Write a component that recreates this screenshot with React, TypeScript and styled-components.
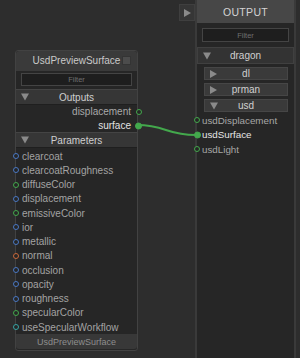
import React from 'react';
import styled, { createGlobalStyle } from 'styled-components';

const GlobalStyle = createGlobalStyle`
  html, body {
    margin: 0;
    padding: 0;
    background: #2d2d2d;
    font-family: "Liberation Sans", Arial, sans-serif;
  }
`;

const Page = styled.div`
  position: relative;
  width: 300px;
  height: 358px;
  overflow: hidden;
  display: flex;
  background: #2d2d2d;
`;

const Canvas = styled.div`
  position: relative;
  flex: 1;
`;

const Wire = styled.svg`
  position: absolute;
  left: 0;
  top: 0;
  pointer-events: none;
  z-index: 3;
`;

// node window, its place on the graph is the content
const Node = styled.div`
  position: absolute;
  left: 15px;
  top: 50px;
  width: 121px;
  height: 299px;
  background: #262626;
  border: 1px solid #424242;
  border-radius: 3px;
  display: flex;
  flex-direction: column;
`;

const NodeHeader = styled.div`
  height: 20px;
  background: #3a3a3a;
  position: relative;
  display: flex;
  align-items: center;
  justify-content: center;
  color: #c9c9c9;
  font-size: 10px;
  border-radius: 3px 3px 0 0;
`;

const Swatch = styled.div`
  position: absolute;
  right: 6px;
  top: 5px;
  width: 7px;
  height: 7px;
  background: #4c4c4c;
  border: 1px solid #343434;
`;

const FilterBox = styled.div<{ $w: number }>`
  width: ${p => p.$w}px;
  height: 12px;
  margin: 2px auto 0;
  background: #1e1e1e;
  border: 1px solid #444;
  color: #6e6e6e;
  font-size: 7.5px;
  display: flex;
  align-items: center;
  justify-content: center;
`;

const SectionBar = styled.div<{ $mt: number }>`
  height: 14px;
  margin-top: ${p => p.$mt}px;
  background: #363636;
  border-top: 1px solid #444;
  border-bottom: 1px solid #1f1f1f;
  position: relative;
  display: flex;
  align-items: center;
  justify-content: center;
  color: #cfcfcf;
  font-size: 10px;
`;

const Arrow = styled.span<{ $down?: boolean }>`
  position: absolute;
  left: 5px;
  top: 50%;
  transform: translateY(-50%);
  width: 0;
  height: 0;
  ${p =>
    p.$down
      ? `border-left: 4px solid transparent; border-right: 4px solid transparent; border-top: 7px solid #8a8a8a;`
      : `border-top: 4px solid transparent; border-bottom: 4px solid transparent; border-left: 7px solid #8a8a8a;`}
`;

const ToggleArrow = styled.span`
  width: 0;
  height: 0;
  border-top: 4px solid transparent;
  border-bottom: 4px solid transparent;
  border-left: 7px solid #8a8a8a;
`;

const OutRow = styled.div<{ $bright?: boolean }>`
  height: 14px;
  display: flex;
  align-items: center;
  justify-content: flex-end;
  padding-right: 6px;
  position: relative;
  color: ${p => (p.$bright ? '#e2e2e2' : '#a9a9a9')};
  font-size: 10px;
`;

const ParamList = styled.div`
  padding-top: 1px;
  flex: 1;
`;

const ParamRow = styled.div`
  height: 14.25px;
  display: flex;
  align-items: center;
  padding-left: 6px;
  position: relative;
  color: #a3a3a3;
  font-size: 10px;
`;

const Port = styled.span<{ $c: string; $filled?: boolean; $side: 'left' | 'right' }>`
  position: absolute;
  ${p => (p.$side === 'left' ? 'left: -3.5px;' : 'right: -4.5px;')}
  top: 50%;
  transform: translateY(-50%);
  width: ${p => (p.$filled ? 7 : 6)}px;
  height: ${p => (p.$filled ? 7 : 6)}px;
  box-sizing: border-box;
  border-radius: 50%;
  border: 1.6px solid ${p => p.$c};
  background: ${p => (p.$filled ? p.$c : '#262626')};
`;

const NodeFooter = styled.div`
  height: 15px;
  margin: 0 0 1px;
  background: #383838;
  color: #8e8e8e;
  font-size: 9px;
  display: flex;
  align-items: center;
  justify-content: center;
  border-radius: 0 0 3px 3px;
`;

const ToggleBtn = styled.div`
  position: absolute;
  right: 0;
  top: 4px;
  width: 14px;
  height: 15px;
  background: #363636;
  border: 1px solid #3f3f3f;
  display: flex;
  align-items: center;
  justify-content: center;
`;

const Panel = styled.div`
  width: 97px;
  height: 100%;
  border-left: 2px solid #3a3a3a;
  border-right: 2px solid #3a3a3a;
  margin-right: 4px;
  background: #262626;
  display: flex;
  flex-direction: column;
  position: relative;
`;

const PanelHeader = styled.div`
  height: 23px;
  background: #474747;
  color: #d4d4d4;
  font-size: 10.5px;
  letter-spacing: 0.3px;
  display: flex;
  align-items: center;
  justify-content: center;
`;

const PanelFilter = styled(FilterBox)`
  margin-top: 5px;
  height: 12px;
`;

const TreeBar = styled.div<{ $inset?: boolean }>`
  height: ${p => (p.$inset ? 11 : 15)}px;
  margin: ${p => (p.$inset ? '3px 6px 0 7px' : '5px 0 0 0')};
  background: ${p => (p.$inset ? '#3a3a3a' : '#333333')};
  border: 1px solid ${p => (p.$inset ? '#464646' : '#404040')};
  position: relative;
  display: flex;
  align-items: center;
  justify-content: center;
  color: #d0d0d0;
  font-size: 10px;
`;

const PanelPorts = styled.div`
  margin-top: 1px;
`;

const PanelRow = styled.div<{ $bright?: boolean }>`
  height: 14.5px;
  display: flex;
  align-items: center;
  padding-left: 5px;
  position: relative;
  color: ${p => (p.$bright ? '#e6e6e6' : '#a6a6a6')};
  font-size: 9.8px;
`;

const BLUE = '#4a78c4';
const GREEN = '#43a84c';
const ORANGE = '#c8683a';
const TEAL = '#38a3a3';

const params: [string, string][] = [
  ['clearcoat', BLUE],
  ['clearcoatRoughness', BLUE],
  ['diffuseColor', GREEN],
  ['displacement', BLUE],
  ['emissiveColor', GREEN],
  ['ior', BLUE],
  ['metallic', BLUE],
  ['normal', ORANGE],
  ['occlusion', BLUE],
  ['opacity', BLUE],
  ['roughness', BLUE],
  ['specularColor', GREEN],
  ['useSpecularWorkflow', TEAL],
];

export default function App() {
  return (
    <Page>
      <GlobalStyle />
      <Canvas>
        <Node>
          <NodeHeader>
            <span>UsdPreviewSurface</span>
            <Swatch />
          </NodeHeader>
          <FilterBox $w={109}>Filter</FilterBox>
          <SectionBar $mt={3}>
            <Arrow $down />
            Outputs
          </SectionBar>
          <OutRow>
            displacement
            <Port $c={GREEN} $side="right" />
          </OutRow>
          <OutRow $bright>
            surface
            <Port $c={GREEN} $filled $side="right" />
          </OutRow>
          <SectionBar $mt={0}>
            <Arrow $down />
            Parameters
          </SectionBar>
          <ParamList>
            {params.map(([name, c]) => (
              <ParamRow key={name}>
                <Port $c={c} $side="left" />
                {name}
              </ParamRow>
            ))}
          </ParamList>
          <NodeFooter>UsdPreviewSurface</NodeFooter>
        </Node>
        <ToggleBtn>
          <ToggleArrow />
        </ToggleBtn>
        <Wire width="200" height="358">
          <path d="M137 125 C 166 125, 166 135, 196 135" stroke={GREEN} strokeWidth="2" fill="none" />
        </Wire>
      </Canvas>
      <Panel>
        <PanelHeader>OUTPUT</PanelHeader>
        <PanelFilter $w={85}>Filter</PanelFilter>
        <TreeBar>
          <Arrow $down />
          dragon
        </TreeBar>
        <TreeBar $inset>
          <Arrow />
          dl
        </TreeBar>
        <TreeBar $inset>
          <Arrow />
          prman
        </TreeBar>
        <TreeBar $inset>
          <Arrow $down />
          usd
        </TreeBar>
        <PanelPorts>
          <PanelRow>
            <Port $c={GREEN} $side="left" />
            usdDisplacement
          </PanelRow>
          <PanelRow $bright>
            <Port $c={GREEN} $filled $side="left" />
            usdSurface
          </PanelRow>
          <PanelRow>
            <Port $c={GREEN} $side="left" />
            usdLight
          </PanelRow>
        </PanelPorts>
      </Panel>
    </Page>
  );
}
